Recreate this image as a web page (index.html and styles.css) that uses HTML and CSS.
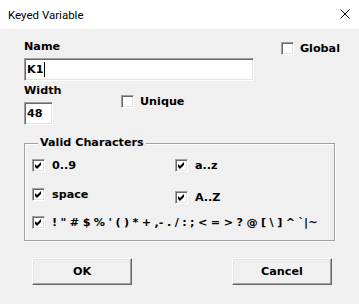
FILE: index.html
```html
<!DOCTYPE html>
<html>
<head>
<meta charset="utf-8">
<link rel="stylesheet" href="styles.css">
</head>
<body>
<div class="window">
  <div class="titlebar">
    <span class="title">Keyed Variable</span>
    <svg class="close" width="10" height="10" viewBox="0 0 10 10"><path d="M0.5 0.5 L9.5 9.5 M9.5 0.5 L0.5 9.5" stroke="#000" stroke-width="1" fill="none"/></svg>
  </div>
  <div class="content">
    <div class="row-name">
      <span class="label">Name</span>
      <div class="check global"><span class="box"></span><span class="text">Global</span></div>
    </div>
    <div class="field name-field"><span class="value">K1</span><span class="caret"></span></div>
    <div class="row-width">
      <div class="width-group">
        <span class="label">Width</span>
        <div class="field width-field"><span class="value">48</span></div>
      </div>
      <div class="check unique"><span class="box"></span><span class="text">Unique</span></div>
    </div>
    <fieldset class="group">
      <legend>Valid Characters</legend>
      <div class="grid">
        <div class="check"><span class="box checked"><svg viewBox="0 0 11 11" width="11" height="11"><polygon points="2,4 4,6 8,2 8,5 4,9 2,7" fill="#000"/></svg></span><span class="text">0..9</span></div>
        <div class="check"><span class="box checked"><svg viewBox="0 0 11 11" width="11" height="11"><polygon points="2,4 4,6 8,2 8,5 4,9 2,7" fill="#000"/></svg></span><span class="text">a..z</span></div>
        <div class="check"><span class="box checked"><svg viewBox="0 0 11 11" width="11" height="11"><polygon points="2,4 4,6 8,2 8,5 4,9 2,7" fill="#000"/></svg></span><span class="text">space</span></div>
        <div class="check upper"><span class="box checked"><svg viewBox="0 0 11 11" width="11" height="11"><polygon points="2,4 4,6 8,2 8,5 4,9 2,7" fill="#000"/></svg></span><span class="text">A..Z</span></div>
        <div class="check special"><span class="box checked"><svg viewBox="0 0 11 11" width="11" height="11"><polygon points="2,4 4,6 8,2 8,5 4,9 2,7" fill="#000"/></svg></span><span class="text">! " # $ % ' ( ) * + ,- . / : ; &lt; = &gt; ? @ [ \ ] ^ `|~</span></div>
      </div>
    </fieldset>
    <div class="buttons">
      <button class="btn">OK</button>
      <button class="btn">Cancel</button>
    </div>
  </div>
</div>
</body>
</html>
```
FILE: styles.css
```css
html, body {
  margin: 0;
  padding: 0;
}
body {
  background: #f0f0f0;
  font-family: "DejaVu Sans", sans-serif;
  font-weight: bold;
  font-size: 11.2px;
  line-height: 14px;
  color: #000;
  width: 359px;
  height: 304px;
  overflow: hidden;
}
.titlebar {
  height: 29px;
  box-sizing: border-box;
  background: #fff;
  display: flex;
  align-items: flex-start;
  justify-content: space-between;
  padding: 8px 9px 0 8px;
}
.title {
  font-family: Roboto, sans-serif;
  font-weight: normal;
  font-size: 11.5px;
  line-height: 14px;
  color: #000;
}
.close {
  margin-top: 1px;
  display: block;
}
.content {
  padding: 11px 18px 0 24px;
}
.row-name {
  display: flex;
  justify-content: space-between;
  height: 14px;
}
.label {
  display: block;
  height: 14px;
  white-space: nowrap;
}
.check {
  display: flex;
  align-items: center;
  gap: 7px;
  height: 13px;
  line-height: 13px;
  white-space: nowrap;
}
.global {
  gap: 6px;
  height: 14px;
  margin-top: 1px;
  margin-right: 1px;
}
.box {
  width: 13px;
  height: 13px;
  box-sizing: border-box;
  flex: none;
  background: #fff;
  border-top: 1px solid #a0a0a0;
  border-left: 1px solid #a0a0a0;
  border-right: 1px solid #fff;
  border-bottom: 1px solid #fff;
  box-shadow: inset 1px 1px 0 #696969, inset -1px -1px 0 #e3e3e3;
  display: flex;
}
.box svg {
  display: block;
}
.field {
  box-sizing: border-box;
  background: #fff;
  border-top: 1px solid #a0a0a0;
  border-left: 1px solid #a0a0a0;
  border-right: 1px solid #fff;
  border-bottom: 1px solid #fff;
  box-shadow: inset 1px 1px 0 #696969, inset -1px -1px 0 #e3e3e3;
  display: flex;
  align-items: center;
  padding-left: 2px;
  height: 23px;
}
.name-field {
  margin-top: 4px;
  width: 230px;
}
.caret {
  width: 1px;
  height: 15px;
  background: #000;
  margin-left: 1px;
}
.row-width {
  display: flex;
  margin-top: 3px;
}
.width-group {
  display: flex;
  flex-direction: column;
  width: 29px;
}
.width-field {
  margin-top: 4px;
  width: 29px;
}
.unique {
  margin-left: 68px;
  margin-top: 11px;
  gap: 6px;
}
.group {
  margin: 11px 0 0 0;
  width: 311px;
  box-sizing: border-box;
  padding: 9px 0 11px 7px;
  border: 1px solid #a0a0a0;
  box-shadow: inset 1px 1px 0 #fff, 1px 1px 0 #fff;
  min-inline-size: 0;
}
.group legend {
  margin-left: 6px;
  padding: 0 2px;
  line-height: 14px;
  background: #f0f0f0;
}
.grid {
  display: grid;
  grid-template-columns: 143px auto;
  grid-template-rows: 29px 28px 13px;
}
.upper {
  margin-top: 3px;
}
.special {
  grid-column: 1 / 3;
  word-spacing: -0.45px;
}
.buttons {
  display: flex;
  gap: 100px;
  margin-top: 17px;
  padding-left: 8px;
}
.btn {
  width: 100px;
  height: 27px;
  box-sizing: border-box;
  background: #f0f0f0;
  font-family: "DejaVu Sans", sans-serif;
  font-weight: bold;
  font-size: 11.2px;
  color: #000;
  padding: 0;
  border-top: 1px solid #fff;
  border-left: 1px solid #fff;
  border-right: 1px solid #696969;
  border-bottom: 1px solid #696969;
  box-shadow: inset -1px -1px 0 #a0a0a0, inset 1px 1px 0 #e3e3e3;
}
```
